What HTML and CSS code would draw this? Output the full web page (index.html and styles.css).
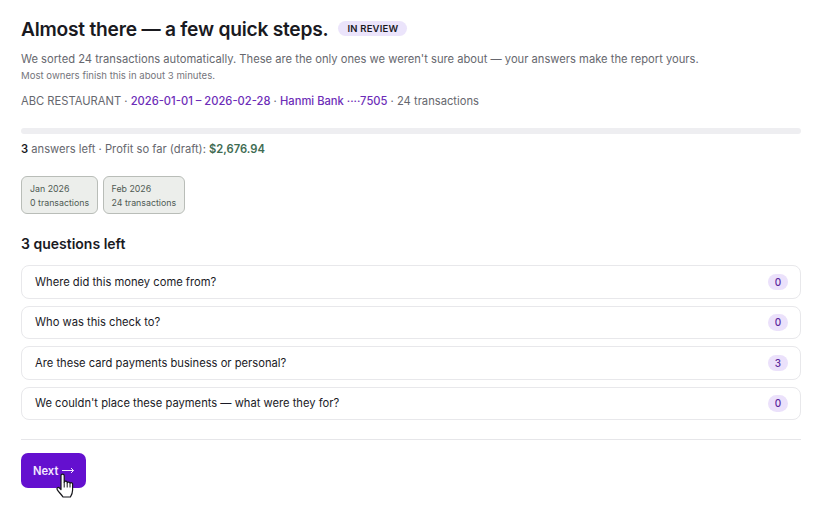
FILE: index.html
```html
<!DOCTYPE html>
<html lang="en">
<head>
    <meta charset="UTF-8">
    <meta name="viewport" content="width=device-width, initial-scale=1.0">
    <title>Almost there</title>
    <link rel="stylesheet" href="styles.css">
</head>
<body>
    <div class="container">
        <div class="title-row">
            <h1>Almost there — a few quick steps.</h1>
            <span class="status-badge">IN REVIEW</span>
        </div>
        <p class="intro">We sorted 24 transactions automatically. These are the only ones we weren't sure about — your answers make the report yours.</p>
        <p class="hint">Most owners finish this in about 3 minutes.</p>
        <p class="meta">ABC RESTAURANT · <span class="accent">2026-01-01 – 2026-02-28</span> · <span class="accent">Hanmi Bank ····7505</span> · 24 transactions</p>

        <div class="progress"></div>
        <p class="summary"><strong>3</strong> answers left · Profit so far (draft): <strong class="profit">$2,676.94</strong></p>

        <div class="months">
            <div class="month">
                <span>Jan 2026</span>
                <span>0 transactions</span>
            </div>
            <div class="month">
                <span>Feb 2026</span>
                <span>24 transactions</span>
            </div>
        </div>

        <h2>3 questions left</h2>
        <div class="questions">
            <div class="question"><span>Where did this money come from?</span><span class="count">0</span></div>
            <div class="question"><span>Who was this check to?</span><span class="count">0</span></div>
            <div class="question"><span>Are these card payments business or personal?</span><span class="count">3</span></div>
            <div class="question"><span>We couldn't place these payments — what were they for?</span><span class="count">0</span></div>
        </div>

        <div class="footer">
            <button class="next-btn">Next
                <svg class="arrow" width="12" height="7" viewBox="0 0 12 7">
                    <path d="M0 3.500H11.500M9 1l2.500 2.500L9 6" fill="none" stroke="currentColor" stroke-width="1"/>
                </svg>
            </button>
            <svg class="cursor" width="18" height="25" viewBox="0 0 18 25">
                <path d="M5 2.800a1.600 1.600 0 0 1 3.200 0V9.500a1.500 1.500 0 0 1 3 .3a1.500 1.500 0 0 1 2.800 .7a1.400 1.400 0 0 1 2.600 1V17c0 3-1 5-2.200 7H7C5.500 21.500 3 19.500 1.200 16.600c-.9-1.500 1-2.800 2.200-1.600L5 16.500Z" fill="#fff" stroke="#15151a" stroke-width="1.200" stroke-linejoin="round"/>
                <path d="M8.200 9.500V14.500M11.200 10V14.500M14 11V14.500" fill="none" stroke="#15151a" stroke-width="1"/>
            </svg>
        </div>
    </div>
</body>
</html>
```

FILE: styles.css
```css
* {
    box-sizing: border-box;
}
body {
    margin: 0;
    min-height: 100vh;
    font-family: Inter, "Liberation Sans", sans-serif;
    background-color: #fff;
    color: #1a1a1f;
}
.container {
    padding: 16px 20px 29px 21px;
}
p {
    margin: 0;
}
.title-row {
    display: flex;
    align-items: center;
    gap: 10px;
    height: 25px;
}
h1 {
    margin: 0;
    font-size: 19.2px;
    font-weight: 600;
    letter-spacing: -0.23px;
}
.status-badge {
    padding: 2px 9px;
    border-radius: 10px;
    background-color: #ebe4fb;
    font-size: 9.5px;
    font-weight: 600;
    letter-spacing: 0.2px;
}
.intro {
    margin-top: 9px;
    font-size: 11.2px;
    line-height: 18px;
    color: #66676e;
}
.hint {
    margin-top: 1px;
    font-size: 9.6px;
    line-height: 14px;
    color: #75757c;
}
.meta {
    margin-top: 9px;
    font-size: 11.2px;
    line-height: 18px;
    color: #66676e;
}
.accent {
    font-weight: 500;
    color: #6d2db8;
}
.progress {
    margin-top: 18px;
    height: 6px;
    border-radius: 3px;
    background-color: #eeeef1;
}
.summary {
    margin-top: 6px;
    font-size: 11.2px;
    line-height: 18px;
    color: #66676e;
}
.summary strong {
    font-weight: 600;
    color: #1a1a1f;
}
.summary .profit {
    color: #3e6b52;
}
.months {
    display: flex;
    gap: 5px;
    margin-top: 18px;
}
.month {
    display: flex;
    flex-direction: column;
    gap: 1px;
    height: 38px;
    padding: 5px 7.5px 5px 8px;
    border: 1px solid #b9bdb8;
    border-radius: 6px;
    background-color: #eceeeb;
    font-size: 8.8px;
    line-height: 13px;
    color: #4f5b54;
}
h2 {
    margin: 20px 0 0;
    font-size: 14px;
    line-height: 20px;
    font-weight: 600;
}
.questions {
    display: flex;
    flex-direction: column;
    gap: 7px;
    margin-top: 11px;
}
.question {
    display: flex;
    align-items: center;
    justify-content: space-between;
    height: 33.5px;
    padding: 0 12px 0 13px;
    border: 1px solid #e8e8eb;
    border-radius: 8px;
    font-size: 11.2px;
    color: #1a1a26;
}
.count {
    min-width: 20px;
    padding: 1px 6px;
    border-radius: 9px;
    background-color: #ebe1fb;
    font-size: 10px;
    line-height: 14.500px;
    font-weight: 500;
    text-align: center;
    color: #5b2a9d;
}
.footer {
    position: relative;
    margin-top: 19px;
    padding-top: 13px;
    border-top: 1px solid #e6e6e9;
}
.next-btn {
    display: flex;
    align-items: center;
    gap: 4px;
    height: 35px;
    width: 65px;
    padding: 0 0 0 12px;
    border: none;
    border-radius: 7px;
    background-color: #6410cf;
    color: #f4e9ff;
    font-family: inherit;
    font-size: 11.2px;
    font-weight: 600;
}
.cursor {
    position: absolute;
    z-index: 5;
    left: 35px;
    top: 33px;
    overflow: visible;
}
```
